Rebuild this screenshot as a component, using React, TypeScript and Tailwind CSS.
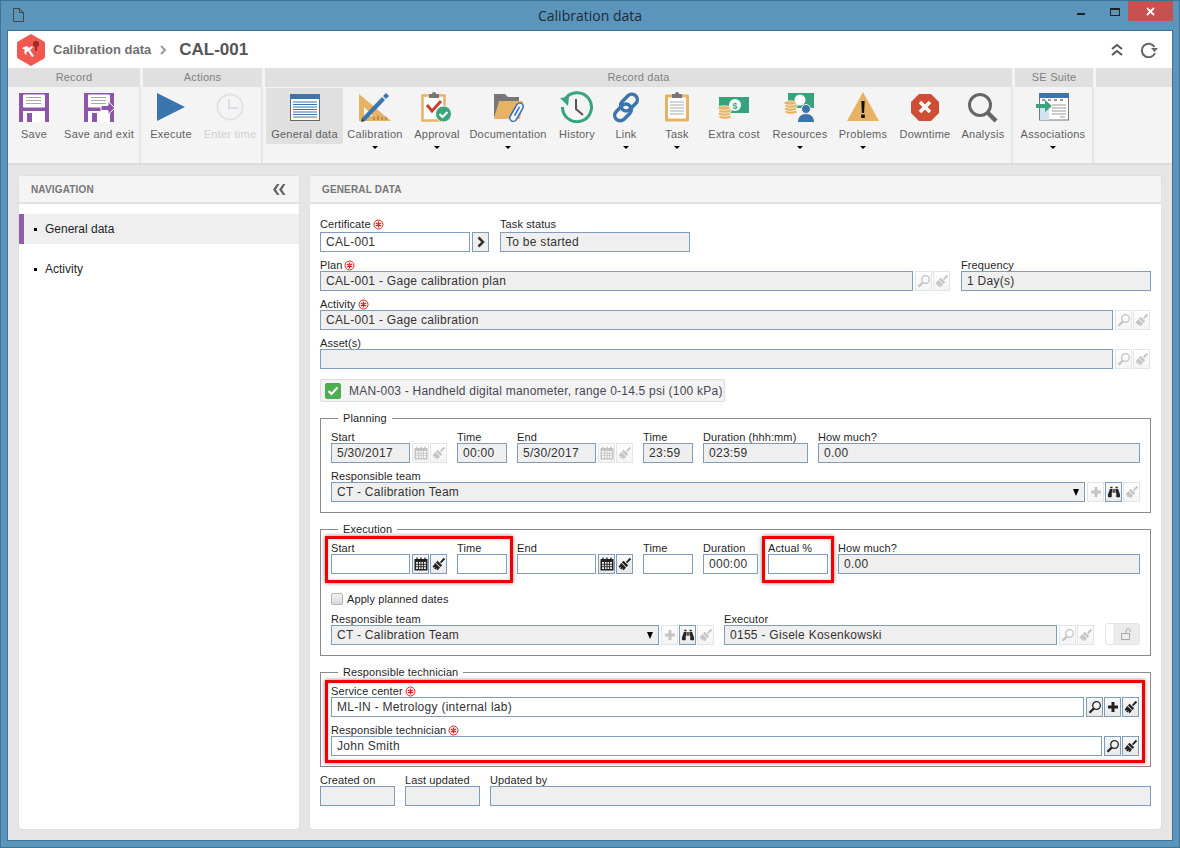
import React from "react";
import { FaBinoculars } from "react-icons/fa";

const Arrow = () => <div className="mt-[6px] h-0 w-0 border-x-[3px] border-t-[3px] border-x-transparent border-t-black" />;

const Floppy = ({ exit }: { exit?: boolean }) => (
  <svg width="32" height="32" viewBox="0 0 32 32">
    <path d="M1 2h30v29H1z" fill="#8c57a8" />
    <rect x="5" y="3.5" width="22" height="13" rx="1" fill="#fff" />
    <path d="M8 6.5h15M8 9.5h15M8 12.5h15" stroke="#aaa" strokeWidth="1" />
    <rect x="5" y="20" width="22" height="11" fill="#fff" />
    <rect x="9" y="22" width="5" height="9" fill="#8c57a8" />
    {exit && <path d="M18 14.5h7v-4l7 6.5-7 6.5v-4h-7z" fill="#8c57a8" stroke="#fff" strokeWidth="1" />}
  </svg>
);
const Play = () => (
  <svg width="32" height="32" viewBox="0 0 32 32"><path d="M2 2l28 14-28 14z" fill="#3b75ae" /></svg>
);
const Clock = () => (
  <svg width="32" height="32" viewBox="0 0 32 32" fill="none">
    <circle cx="16" cy="16" r="12.5" stroke="#e2e2e2" strokeWidth="2" />
    <path d="M15 8v9h9" stroke="#cfd8e4" strokeWidth="1.5" />
  </svg>
);
const GeneralIcon = () => (
  <svg width="32" height="32" viewBox="0 0 32 32">
    <rect x="1.5" y="3.5" width="29" height="26" fill="#fff" stroke="#666" />
    <rect x="1" y="3" width="30" height="5" fill="#3d74ad" />
    <path d="M4 11h24M4 13.5h24M4 16h24M4 18.500h24M4 21h24M4 23.500h24M4 26h24" stroke="#3d74ad" strokeWidth="1" />
  </svg>
);
const CalibrationIcon = () => (
  <svg width="34" height="32" viewBox="0 0 34 32">
    <path d="M1 3v27h32z" fill="#e8b264" />
    <path d="M6 16v9h9z" fill="#f4f4f4" />
    <path d="M16 29v-3M20 29v-4M24 29v-3M28 29v-3" stroke="#8a6a3a" strokeWidth="1" />
    <path d="M4 27l3 3 20-21-3-3z" fill="#3b75ae" />
    <path d="M25 5l3 3 3-3-3-3z" fill="#3b75ae" />
    <path d="M3 31l1-4 3 3z" fill="#1f3f63" />
  </svg>
);
const ApprovalIcon = () => (
  <svg width="32" height="32" viewBox="0 0 32 32">
    <rect x="1.500" y="4.500" width="22" height="25" fill="#fff" stroke="#e8b264" strokeWidth="2.500" />
    <path d="M8 3h3a2 2 0 0 1 4 0h3v4H8z" fill="#777" />
    <path d="M6 14l5 6 9-10" fill="none" stroke="#c9402f" strokeWidth="3" />
    <circle cx="22.500" cy="23" r="8" fill="#3fa37c" stroke="#f4f4f4" />
    <path d="M18.500 23l3 3 5-5" fill="none" stroke="#fff" strokeWidth="2" />
  </svg>
);
const FolderIcon = () => (
  <svg width="32" height="32" viewBox="0 0 32 32">
    <path d="M2 27V3h11l3 3h11v5H8z" fill="#777" />
    <path d="M2 28l5-18h24l-3 18z" fill="#e8b264" />
    <g fill="none" stroke="#2f6fb5" strokeWidth="1.500" transform="rotate(30 24 22)">
      <rect x="20.500" y="11" width="7" height="20" rx="3.500" fill="#f4f4f4" />
      <path d="M24 15v10" />
    </g>
  </svg>
);
const HistoryIcon = () => (
  <svg width="34" height="32" viewBox="0 0 34 32" fill="none">
    <path d="M5 8a14.500 14.500 0 1 1-2.500 8" stroke="#38a37e" strokeWidth="3" />
    <path d="M0 7l9-1-1 9z" fill="#38a37e" />
    <path d="M16 8v10l7 6" stroke="#555" strokeWidth="2" />
  </svg>
);
const LinkIcon = () => (
  <svg width="34" height="32" viewBox="0 0 34 32" fill="none" stroke="#3b75ae" strokeWidth="3.500">
    <rect x="1" y="11" width="19" height="11" rx="5.500" transform="rotate(-45 10.500 16.500) translate(-1 6)" />
    <rect x="14" y="11" width="19" height="11" rx="5.500" transform="rotate(-45 23.500 16.500) translate(1 -6)" />
  </svg>
);
const TaskIcon = () => (
  <svg width="32" height="32" viewBox="0 0 32 32">
    <rect x="4" y="3.500" width="24" height="27" rx="1" fill="#e8b264" />
    <rect x="7" y="6.500" width="18" height="21" fill="#fff" />
    <path d="M11 3h3a2 2 0 0 1 4 0h3v4H11z" fill="#777" />
    <path d="M9 11h14M9 14h14M9 17h14M9 20h14M9 23h14" stroke="#aaa" strokeWidth="1" />
  </svg>
);
const Coins = ({ x, y }: { x: number; y: number }) => (
  <g transform={`translate(${x} ${y})`} fill="#e8b264" stroke="#fff" strokeWidth="0.700">
    <ellipse cx="7" cy="11" rx="6.500" ry="2.200" />
    <ellipse cx="6.500" cy="8" rx="6.500" ry="2.200" />
    <ellipse cx="7" cy="5" rx="6.500" ry="2.200" />
    <ellipse cx="6" cy="2" rx="6.500" ry="2.200" />
  </g>
);
const CostIcon = () => (
  <svg width="32" height="32" viewBox="0 0 32 32">
    <rect x="1" y="6" width="30" height="16" fill="#37a37c" />
    <circle cx="17" cy="14" r="6" fill="#fff" />
    <text x="17" y="17.500" fontSize="9" textAnchor="middle" fill="#37a37c" fontFamily="'Liberation Sans', sans-serif" fontWeight="700">$</text>
    <Coins x={0} y={15} />
  </svg>
);
const ResourcesIcon = () => (
  <svg width="32" height="32" viewBox="0 0 32 32">
    <rect x="4" y="2" width="26" height="15" fill="#37a37c" />
    <circle cx="16" cy="9" r="5.500" fill="#fff" />
    <Coins x={0} y={10} />
    <circle cx="22" cy="18" r="4.500" fill="#3b75ae" stroke="#f4f4f4" />
    <path d="M14 31c0-5 3-8 8-8s8 3 8 8z" fill="#3b75ae" />
  </svg>
);
const WarnIcon = () => (
  <svg width="34" height="32" viewBox="0 0 34 32">
    <path d="M17 1L33 30H1z" fill="#e8b264" />
    <path d="M15.300 10h3.400l-.6 12h-2.200z" fill="#111" />
    <rect x="15.200" y="23.500" width="3.600" height="3.500" fill="#111" />
  </svg>
);
const StopIcon = () => (
  <svg width="32" height="32" viewBox="0 0 32 32">
    <path d="M10 3h12l8 8v11l-8 8H10l-8-8V11z" fill="#cf4d35" />
    <path d="M11 11l10 10M21 11L11 21" stroke="#fff" strokeWidth="3.500" />
  </svg>
);
const AnalysisIcon = () => (
  <svg width="34" height="32" viewBox="0 0 34 32" fill="none" stroke="#666">
    <circle cx="14" cy="14" r="10.500" strokeWidth="3" />
    <path d="M22 22l8 8" strokeWidth="4.500" />
  </svg>
);
const AssocIcon = () => (
  <svg width="34" height="32" viewBox="0 0 34 32">
    <rect x="3.500" y="3" width="29" height="26" fill="#fff" stroke="#777" />
    <rect x="3" y="2" width="30" height="5" fill="#3d74ad" />
    <rect x="4" y="16" width="9" height="13" fill="#cfe3f3" />
    <path d="M6 9h3M12 9h3M18 9h3M24 9h3" stroke="#777" strokeWidth="1.500" />
    <path d="M16 14h14M16 17h14M16 20h14M16 23h14M24 26h5" stroke="#999" strokeWidth="1" />
    <path d="M0 13h9V9l7 6-7 6v-4H0z" fill="#38a37e" />
  </svg>
);

const RibbonBtn = ({ w, icon, label, arrow, off, active }: { w: string; icon: React.ReactNode; label: string; arrow?: boolean; off?: boolean; active?: boolean }) => (
  <div className={`flex shrink-0 flex-col items-center pt-[3px] ${w} ${active ? "h-[56px] bg-[#e0e0e0]" : ""}`}>
    <div className="flex h-[32px] items-center justify-center">{icon}</div>
    <div className={`mt-[5px] whitespace-nowrap text-[11px] leading-[12px] tracking-[0.25px] ${off ? "text-[#cfcfcf]" : "text-[#5f5f5f]"}`}>{label}</div>
    {arrow && <Arrow />}
  </div>
);

const Group = ({ w, hw, title, children, last }: { w: string; hw: string; title?: string; children?: React.ReactNode; last?: boolean }) => (
  <div className={`flex shrink-0 flex-col ${w}`}>
    <div className={`flex h-[19px] items-center justify-center bg-[#e0e0e0] text-[11px] tracking-[0.2px] text-[#808080] ${hw}`}>{title}</div>
    <div className={`flex h-[76px] pt-[1px] ${last ? "" : "mr-[2px] border-r-2 border-[#e6e6e6]"}`}>{children}</div>
  </div>
);

const Req = () => (
  <svg width="11" height="11" viewBox="0 0 11 11" className="ml-[2px] inline-block align-[-1px]" fill="none" stroke="#e02020">
    <circle cx="5.500" cy="5.500" r="4.500" strokeWidth="1" />
    <path d="M5.500 2.500v6M2.800 4l5.400 3M2.800 7l5.400-3" strokeWidth="1.300" />
  </svg>
);

const Label = ({ children, req, mb }: { children: React.ReactNode; req?: boolean; mb?: boolean }) => (
  <div className={`flex h-[12px] items-center whitespace-nowrap text-[11px] leading-[12px] tracking-[0.1px] text-[#1f1f1f] ${mb ? "mb-[2px]" : ""}`}>
    {children}
    {req && <Req />}
  </div>
);

const Box = ({ v, grey, cls, center }: { v?: string; grey?: boolean; cls?: string; center?: boolean }) => (
  <div className={`h-[20px] truncate border border-[#7f9db9] pl-[5px] text-[12px] leading-[18px] tracking-[0.28px] text-[#333] ${grey ? "bg-[#efefef]" : "bg-white"} ${center ? "" : ""} ${cls ?? ""}`}>{v}</div>
);

const Mag = () => (
  <svg width="14" height="14" viewBox="0 0 14 14" fill="none" stroke="currentColor">
    <circle cx="8.500" cy="5.500" r="3.800" strokeWidth="1.300" />
    <path d="M5.800 8.500L1.500 12.800" strokeWidth="2.300" />
  </svg>
);
const Brush = () => (
  <svg width="14" height="14" viewBox="0 0 14 14" fill="currentColor">
    <path d="M8 5l3.700-4.200 1.500 1.400L9.200 6.200z" />
    <path d="M5.500 3.800l4.700 4.400-1.700 1.700-4.600-4.400z" />
    <path d="M3.200 6L8 10.500l-2.300 2.700-1.100-.6.600-1.700-1.800 1.500-1.300-.9 1.200-1.700-1.800.9-.9-1z" />
  </svg>
);
const Cal = () => (
  <svg width="14" height="14" viewBox="0 0 14 14">
    <rect x="0.500" y="2" width="13" height="11.500" fill="currentColor" />
    <path d="M2 5h10v7H2z" fill="#fff" opacity="0.9" />
    <path d="M3 0.500v3M7 0.500v3M11 0.500v3" stroke="currentColor" strokeWidth="1.300" />
    <path d="M2 7.300h10M2 9.700h10M4.500 5v7M7 5v7M9.500 5v7" stroke="currentColor" strokeWidth="0.900" />
  </svg>
);
const Plus = () => (
  <svg width="12" height="12" viewBox="0 0 12 12"><path d="M4.500 1h3v3.500H11v3H7.500V11h-3V7.500H1v-3h3.500z" fill="currentColor" /></svg>
);

const Tool = ({ off, children, ml }: { off?: boolean; children: React.ReactNode; ml?: boolean }) => (
  <div className={`flex h-[20px] w-[17px] shrink-0 items-center justify-center border bg-gradient-to-b ${ml ? "ml-[1px]" : ""} ${off ? "border-[#dfe5ea] from-white to-[#f4f4f4] text-[#c4c4c4]" : "border-[#7f9db9] from-[#fafafa] to-[#e8e8e8] text-[#222]"}`}>
    {children}
  </div>
);

const Sec = ({ title, children }: { title: string; children: React.ReactNode }) => (
  <fieldset className="mt-[9px] border border-[#8a8a8a] px-[10px] pb-[10px] pt-[5px]">
    <legend className="ml-[7px] px-[5px] text-[11px] leading-[15px] tracking-[0.1px] text-[#1f1f1f]">{title}</legend>
    {children}
  </fieldset>
);

const Mark = ({ cls }: { cls: string }) => (
  <div className={`pointer-events-none absolute border-[3px] border-[#f00000] shadow-[0_0_4px_rgba(0,0,0,0.5),inset_0_0_3px_rgba(0,0,0,0.25)] ${cls}`} />
);

export default function App() {
  return (
    <div className="flex h-[848px] w-[1180px] flex-col overflow-hidden border border-[#3e7397] bg-[#5b95bb] font-['Liberation_Sans',Arial,sans-serif]">
      <div className="grid h-[29px] shrink-0 grid-cols-[1fr_auto_1fr]">
        <div className="pl-[12px] pt-[7px]">
          <svg width="11" height="14" viewBox="0 0 11 14" fill="none" stroke="#444"><path d="M.5.500h6l4 4v9H.5zM6.500.500v4h4" /></svg>
        </div>
        <div className="pt-[5px] font-['Open_Sans',sans-serif] text-[14px] leading-[20px] text-[#1d2b36]">Calibration data</div>
        <div className="flex justify-end pr-[6px]">
          <div className="mr-[8px] mt-[12px] h-[2px] w-[8px] bg-[#222]" />
          <div className="mr-[8px] ml-[17px] mt-[7px] h-[8px] w-[10px] border border-t-2 border-[#222]" />
          <div className="flex h-[20px] w-[45px] items-center justify-center bg-[#c75050] text-white">
            <svg width="9" height="9" viewBox="0 0 9 9" stroke="#fff" strokeWidth="1.800"><path d="M1 1l7 7M8 1L1 8" /></svg>
          </div>
        </div>
      </div>

      <div className="mx-[6px] mb-[6px] flex min-h-0 flex-1 flex-col border border-[#3e7397] bg-[#e5e5e5]">
        <div className="flex h-[37px] shrink-0 items-center bg-white pr-[14px]">
          <svg width="32" height="34" viewBox="0 0 32 34" className="ml-[7px]">
            <path d="M16 1l13 7.500a2 2 0 0 1 1 1.700v13.600a2 2 0 0 1-1 1.700L16 33 3 25.500a2 2 0 0 1-1-1.700V10.200a2 2 0 0 1 1-1.700z" fill="#f1584f" />
            <path d="M7 15l5-2 2 2 3-2 1 1-3 3 4 6-2 1-4-6-2 2 1 2-2-1-1-2 1-2z" fill="#fff" />
            <circle cx="21" cy="11" r="3" fill="#9c2b25" />
            <rect x="20" y="14" width="2" height="4" fill="#9c2b25" />
          </svg>
          <div className="ml-[6px] text-[13px] font-bold text-[#707070]">Calibration data</div>
          <svg width="7" height="10" viewBox="0 0 7 10" className="ml-[9px]" fill="none" stroke="#999" strokeWidth="2"><path d="M1 1l4 4-4 4" /></svg>
          <div className="ml-[12px] text-[17px] font-bold text-[#555]">CAL-001</div>
          <div className="flex-1" />
          <svg width="12" height="13" viewBox="0 0 12 13" fill="none" stroke="#555" strokeWidth="2"><path d="M1 6l5-4 5 4M1 12l5-4 5 4" /></svg>
          <svg width="18" height="16" viewBox="0 0 18 16" fill="none" className="ml-[17px]">
            <path d="M15 11a6.800 6.800 0 1 1-.5-6" stroke="#666" strokeWidth="2" />
            <path d="M11 6h7l-3.500 4z" fill="#666" />
          </svg>
        </div>

        <div className="flex shrink-0 bg-[#f4f4f4]">
          <Group w="w-[135px]" hw="mr-[3px]" title="Record">
            <RibbonBtn w="w-[52px]" icon={<Floppy />} label="Save" />
            <RibbonBtn w="w-[78px]" icon={<Floppy exit />} label="Save and exit" />
          </Group>
          <Group w="w-[122px]" hw="mr-[3px]" title="Actions">
            <RibbonBtn w="w-[56px]" icon={<Play />} label="Execute" />
            <RibbonBtn w="w-[62px]" icon={<Clock />} label="Enter time" off />
          </Group>
          <Group w="w-[750px]" hw="mr-[3px]" title="Record data">
            <div className="w-[1px] shrink-0" />
            <RibbonBtn w="w-[77px]" icon={<GeneralIcon />} label="General data" active />
            <RibbonBtn w="w-[64px]" icon={<CalibrationIcon />} label="Calibration" arrow />
            <RibbonBtn w="w-[60px]" icon={<ApprovalIcon />} label="Approval" arrow />
            <RibbonBtn w="w-[82px]" icon={<FolderIcon />} label="Documentation" arrow />
            <RibbonBtn w="w-[56px]" icon={<HistoryIcon />} label="History" />
            <RibbonBtn w="w-[42px]" icon={<LinkIcon />} label="Link" arrow />
            <RibbonBtn w="w-[60px]" icon={<TaskIcon />} label="Task" arrow />
            <RibbonBtn w="w-[54px]" icon={<CostIcon />} label="Extra cost" />
            <RibbonBtn w="w-[78px]" icon={<ResourcesIcon />} label="Resources" arrow />
            <RibbonBtn w="w-[48px]" icon={<WarnIcon />} label="Problems" arrow />
            <RibbonBtn w="w-[76px]" icon={<StopIcon />} label="Downtime" />
            <RibbonBtn w="w-[40px]" icon={<AnalysisIcon />} label="Analysis" />
          </Group>
          <Group w="w-[81px]" hw="mr-[3px]" title="SE Suite">
            <RibbonBtn w="w-[76px]" icon={<AssocIcon />} label="Associations" arrow />
          </Group>
          <div className="flex-1">
            <div className="h-[19px] bg-[#e0e0e0]" />
          </div>
        </div>
        <div className="h-[2px] shrink-0 bg-[#dcdcdc]" />

        <div className="flex min-h-0 flex-1 gap-[11px] p-[11px]">
          <div className="w-[280px] shrink-0 rounded-[3px] bg-white shadow-[0_0_1px_rgba(0,0,0,0.2)]">
            <div className="flex h-[28px] items-center justify-between rounded-t-[3px] border-b-2 border-[#e2e2e2] bg-[#f4f4f4] pl-[12px] pr-[13px]">
              <div className="text-[10px] font-bold tracking-[0.15px] text-[#777]">NAVIGATION</div>
              <svg width="13" height="11" viewBox="0 0 13 11" fill="#666"><path d="M4 0h2.500L3 5.500 6.500 11H4L0 5.500zM10 0h2.500L9 5.500l3.500 5.500H10L6 5.500z" /></svg>
            </div>
            <div className="mt-[10px] flex h-[30px] items-center border-l-[5px] border-[#8f5ea9] bg-[#efefef] pl-[10px] text-[12px] text-[#1f1f1f]">
              <div className="mr-[8px] h-[3px] w-[3px] bg-black" />General data
            </div>
            <div className="mt-[10px] flex h-[30px] items-center pl-[15px] text-[12px] text-[#1f1f1f]">
              <div className="mr-[8px] h-[3px] w-[3px] bg-black" />Activity
            </div>
          </div>

          <div className="min-w-0 flex-1 rounded-[3px] bg-white px-[10px] shadow-[0_0_1px_rgba(0,0,0,0.2)]">
            <div className="-mx-[10px] flex h-[28px] items-center rounded-t-[3px] border-b-2 border-[#e2e2e2] bg-[#f4f4f4] pl-[12px] text-[10px] font-bold tracking-[0.15px] text-[#777]">GENERAL DATA</div>

            <div className="mt-[14px] flex">
              <div>
                <Label req mb>Certificate</Label>
                <div className="flex">
                  <Box v="CAL-001" cls="w-[150px]" />
                  <div className="ml-[2px] flex h-[20px] w-[17px] items-center justify-center border border-[#7f9db9] bg-[#efefef]">
                    <svg width="8" height="12" viewBox="0 0 8 12" fill="none" stroke="#333" strokeWidth="2.500"><path d="M1.500 1.500L6 6l-4.500 4.500" /></svg>
                  </div>
                </div>
              </div>
              <div className="ml-[11px]">
                <Label mb>Task status</Label>
                <Box v="To be started" grey cls="w-[190px]" />
              </div>
            </div>

            <div className="mt-[7px] flex">
              <div className="min-w-0 flex-1">
                <Label req>Plan</Label>
                <div className="flex gap-[1px]">
                  <Box v="CAL-001 - Gage calibration plan" grey cls="min-w-0 flex-1" />
                  <Tool off ml><Mag /></Tool>
                  <Tool off><Brush /></Tool>
                </div>
              </div>
              <div className="ml-[11px] w-[190px] shrink-0">
                <Label>Frequency</Label>
                <Box v="1 Day(s)" grey />
              </div>
            </div>

            <div className="mt-[7px] pr-[1px]">
              <Label req>Activity</Label>
              <div className="flex gap-[1px]">
                <Box v="CAL-001 - Gage calibration" grey cls="min-w-0 flex-1" />
                <Tool off ml><Mag /></Tool>
                <Tool off><Brush /></Tool>
              </div>
            </div>

            <div className="mt-[7px] pr-[1px]">
              <Label>Asset(s)</Label>
              <div className="flex gap-[1px]">
                <Box grey cls="min-w-0 flex-1" />
                <Tool off ml><Mag /></Tool>
                <Tool off><Brush /></Tool>
              </div>
            </div>

            <div className="mt-[10px] flex h-[23px] w-[405px] items-center rounded-[2px] border border-[#dcdcdc] bg-[#f3f3f3] pl-[4px] text-[12px] tracking-[0.22px] text-[#474755]">
              <div className="flex h-[16px] w-[16px] items-center justify-center rounded-[2px] bg-[#4cae4f]">
                <svg width="12" height="10" viewBox="0 0 12 10" fill="none" stroke="#fff" strokeWidth="2.200"><path d="M1.500 5l3 3 6-6.500" /></svg>
              </div>
              <span className="ml-[8px] whitespace-nowrap">MAN-003 - Handheld digital manometer, range 0-14.5 psi (100 kPa)</span>
            </div>

            <Sec title="Planning">
              <div className="flex">
                <div>
                  <Label>Start</Label>
                  <div className="flex gap-[1px]">
                    <Box v="5/30/2017" grey cls="w-[79px]" />
                    <Tool off ml><Cal /></Tool>
                    <Tool off><Brush /></Tool>
                  </div>
                </div>
                <div className="ml-[10px]"><Label>Time</Label><Box v="00:00" grey cls="w-[50px]" /></div>
                <div className="ml-[10px]">
                  <Label>End</Label>
                  <div className="flex gap-[1px]">
                    <Box v="5/30/2017" grey cls="w-[79px]" />
                    <Tool off ml><Cal /></Tool>
                    <Tool off><Brush /></Tool>
                  </div>
                </div>
                <div className="ml-[10px]"><Label>Time</Label><Box v="23:59" grey cls="w-[50px]" /></div>
                <div className="ml-[10px]"><Label>Duration (hhh:mm)</Label><Box v="023:59" grey cls="w-[105px]" /></div>
                <div className="ml-[10px] min-w-0 flex-1"><Label>How much?</Label><Box v="0.00" grey /></div>
              </div>
              <div className="mt-[7px]">
                <Label>Responsible team</Label>
                <div className="flex gap-[1px]">
                  <div className="relative min-w-0 flex-1">
                    <Box v="CT - Calibration Team" grey />
                    <div className="absolute right-[6px] top-[7px] h-0 w-0 border-x-[3.500px] border-t-[7px] border-x-transparent border-t-black" />
                  </div>
                  <Tool off ml><Plus /></Tool>
                  <Tool><FaBinoculars size={12} /></Tool>
                  <Tool off><Brush /></Tool>
                </div>
              </div>
            </Sec>

            <Sec title="Execution">
              <div className="flex">
                <div className="relative flex">
                  <div>
                    <Label>Start</Label>
                    <div className="flex gap-[1px]">
                      <Box cls="w-[79px]" />
                      <Tool ml><Cal /></Tool>
                      <Tool><Brush /></Tool>
                    </div>
                  </div>
                  <div className="ml-[10px]"><Label>Time</Label><Box cls="w-[50px]" /></div>
                  <Mark cls="-left-[6px] -right-[6px] -top-[6px] -bottom-[9px]" />
                </div>
                <div className="ml-[10px]">
                  <Label>End</Label>
                  <div className="flex gap-[1px]">
                    <Box cls="w-[79px]" />
                    <Tool ml><Cal /></Tool>
                    <Tool><Brush /></Tool>
                  </div>
                </div>
                <div className="ml-[10px]"><Label>Time</Label><Box cls="w-[50px]" /></div>
                <div className="ml-[10px]"><Label>Duration</Label><Box v="000:00" cls="w-[55px]" /></div>
                <div className="relative ml-[10px]">
                  <Label>Actual %</Label>
                  <Box cls="w-[60px]" />
                  <Mark cls="-left-[6px] -right-[6px] -top-[6px] -bottom-[9px]" />
                </div>
                <div className="ml-[10px] min-w-0 flex-1"><Label>How much?</Label><Box v="0.00" grey /></div>
              </div>
              <div className="mt-[19px] flex h-[12px] items-center">
                <div className="h-[12px] w-[12px] rounded-[2px] border border-[#b5b5b5] bg-gradient-to-b from-[#f2f2f2] to-[#d8d8d8]" />
                <span className="ml-[4px] text-[11px] tracking-[0.1px] text-[#1f1f1f]">Apply planned dates</span>
              </div>
              <div className="mt-[8px] flex items-end">
                <div>
                  <Label>Responsible team</Label>
                  <div className="flex gap-[1px]">
                    <div className="relative w-[328px]">
                      <Box v="CT - Calibration Team" grey />
                      <div className="absolute right-[6px] top-[7px] h-0 w-0 border-x-[3.500px] border-t-[7px] border-x-transparent border-t-black" />
                    </div>
                    <Tool off ml><Plus /></Tool>
                    <Tool><FaBinoculars size={12} /></Tool>
                    <Tool off><Brush /></Tool>
                  </div>
                </div>
                <div className="ml-[10px] min-w-0 flex-1">
                  <Label>Executor</Label>
                  <div className="flex gap-[1px]">
                    <Box v="0155 - Gisele Kosenkowski" grey cls="min-w-0 flex-1" />
                    <Tool off ml><Mag /></Tool>
                    <Tool off><Brush /></Tool>
                  </div>
                </div>
                <div className="ml-[11px] flex h-[22px] w-[35px] shrink-0 rounded-[3px] border border-[#e4e4e4] bg-[#ececec]">
                  <div className="w-[7px] rounded-l-[3px] bg-white" />
                  <div className="flex flex-1 items-center justify-center text-[#aaa]">
                    <svg width="12" height="12" viewBox="0 0 12 12" fill="none" stroke="currentColor"><rect x="1.500" y="5.500" width="8" height="6" /><path d="M6 5.500V3a2.200 2.200 0 0 1 4.400 0v1" /></svg>
                  </div>
                </div>
              </div>
            </Sec>

            <Sec title="Responsible technician">
              <div className="relative">
                <Label req>Service center</Label>
                <div className="flex gap-[1px] pr-[1px]">
                  <Box v="ML-IN - Metrology (internal lab)" cls="min-w-0 flex-1" />
                  <Tool ml><Mag /></Tool>
                  <Tool><Plus /></Tool>
                  <Tool><Brush /></Tool>
                </div>
                <div className="mt-[7px]"><Label req>Responsible technician</Label></div>
                <div className="flex gap-[1px] pr-[1px]">
                  <Box v="John Smith" cls="min-w-0 flex-1" />
                  <Tool ml><Mag /></Tool>
                  <Tool><Brush /></Tool>
                </div>
                <Mark cls="-left-[6px] -right-[5px] -top-[5px] -bottom-[7px]" />
              </div>
            </Sec>

            <div className="mt-[7px] flex">
              <div><Label>Created on</Label><Box grey cls="w-[75px]" /></div>
              <div className="ml-[10px]"><Label>Last updated</Label><Box grey cls="w-[75px]" /></div>
              <div className="ml-[10px] min-w-0 flex-1"><Label>Updated by</Label><Box grey /></div>
            </div>
          </div>
        </div>
      </div>
    </div>
  );
}
